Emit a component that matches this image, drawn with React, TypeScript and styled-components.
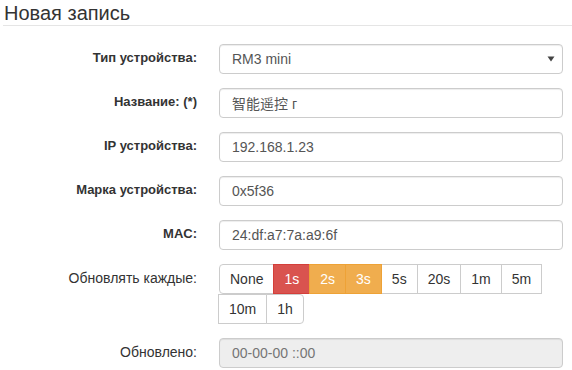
import {FC} from "react";
import styled, {createGlobalStyle} from "styled-components";

const GlobalStyle = createGlobalStyle`
  body {
    margin: 0;
    background: #fff;
    font-family: "Liberation Sans", Arial, sans-serif;
    color: #333;
  }
`

const Page = styled.div`
  width: 572px;
`

const Heading = styled.h4`
  margin: 2px 0 0 3px;
  padding: 0 0 1px 1px;
  height: 22px;
  font-size: 20px;
  font-weight: 400;
  line-height: 22px;
  color: #333;
  border-bottom: 1px solid #e5e5e5;
`

const Form = styled.div`
  display: grid;
  grid-template-columns: 197px 1fr;
  column-gap: 22px;
  row-gap: 14px;
  margin-top: 18px;
  padding-right: 9px;
`

interface ILabel {
    bold?: boolean
}

const Label = styled.label<ILabel>`
  display: block;
  text-align: right;
  padding-top: 4px;
  font-size: ${({bold}) => bold ? '13px' : '14px'};
  font-weight: ${({bold}) => bold ? 700 : 400};
  line-height: 20px;
  color: #333;
`

const Control = styled.input`
  display: block;
  box-sizing: border-box;
  width: 100%;
  height: 30px;
  margin: 0;
  padding: 0 12px;
  font-family: "Liberation Sans", "Noto Sans CJK SC", Arial, sans-serif;
  font-size: 14px;
  color: #555;
  background: #fff;
  border: 1px solid #ccc;
  border-radius: 4px;
  box-shadow: inset 0 1px 1px rgba(0, 0, 0, .075);
  outline: none;

  &:disabled {
    background: #eee;
    color: #999;
  }
`

const SelectBox = styled.div`
  display: flex;
  align-items: center;
  justify-content: space-between;
  box-sizing: border-box;
  height: 30px;
  padding: 0 7px 0 12px;
  font-size: 14px;
  color: #555;
  background: #fff;
  border: 1px solid #ccc;
  border-radius: 4px;
  box-shadow: inset 0 1px 1px rgba(0, 0, 0, .075);
`

const ButtonGroup = styled.div`
  display: flex;
  flex-wrap: wrap;
`

type Variant = 'default' | 'danger' | 'warning'

const palette: Record<Variant, { bg: string, border: string, color: string }> = {
    default: {bg: '#fff', border: '#ccc', color: '#333'},
    danger: {bg: '#d9534f', border: '#d43f3a', color: '#fff'},
    warning: {bg: '#f0ad4e', border: '#eea236', color: '#fff'},
}

const GroupButton = styled.button<{ variant: Variant }>`
  position: relative;
  box-sizing: border-box;
  height: 30px;
  margin: 0 0 0 -1px;
  padding: 0 10px;
  font-family: "Liberation Sans", Arial, sans-serif;
  font-size: 14px;
  line-height: 20px;
  color: ${({variant}) => palette[variant].color};
  background: ${({variant}) => palette[variant].bg};
  border: 1px solid ${({variant}) => palette[variant].border};
  border-radius: 0;
  z-index: ${({variant}) => variant === 'default' ? 0 : 1};

  &:first-child {
    margin-left: 0;
    border-radius: 4px 0 0 4px;
  }

  &:last-child {
    border-radius: 0 4px 4px 0;
  }
`

const intervals: { label: string, variant: Variant }[] = [
    {label: 'None', variant: 'default'},
    {label: '1s', variant: 'danger'},
    {label: '2s', variant: 'warning'},
    {label: '3s', variant: 'warning'},
    {label: '5s', variant: 'default'},
    {label: '20s', variant: 'default'},
    {label: '1m', variant: 'default'},
    {label: '5m', variant: 'default'},
    {label: '10m', variant: 'default'},
    {label: '1h', variant: 'default'},
]

const Caret: FC = () => (
    <svg width="8" height="6" viewBox="0 0 8 6">
        <path d="M0.5 0.5 H7.5 L4 5.5 Z" fill="#444"/>
    </svg>
)

export default function App() {
    return (
        <Page>
            <GlobalStyle/>
            <Heading>Новая запись</Heading>
            <Form>
                <Label bold>Тип устройства:</Label>
                <SelectBox>
                    <span>RM3 mini</span>
                    <Caret/>
                </SelectBox>

                <Label bold>Название: (*)</Label>
                <Control defaultValue="智能遥控 г"/>

                <Label bold>IP устройства:</Label>
                <Control defaultValue="192.168.1.23"/>

                <Label bold>Марка устройства:</Label>
                <Control defaultValue="0x5f36"/>

                <Label bold>MAC:</Label>
                <Control defaultValue="24:df:a7:7a:a9:6f"/>

                <Label>Обновлять каждые:</Label>
                <ButtonGroup>
                    {intervals.map(({label, variant}) =>
                        <GroupButton key={label} variant={variant}>{label}</GroupButton>
                    )}
                </ButtonGroup>

                <Label>Обновлено:</Label>
                <Control disabled placeholder="00-00-00 ::00"/>
            </Form>
        </Page>
    )
}
